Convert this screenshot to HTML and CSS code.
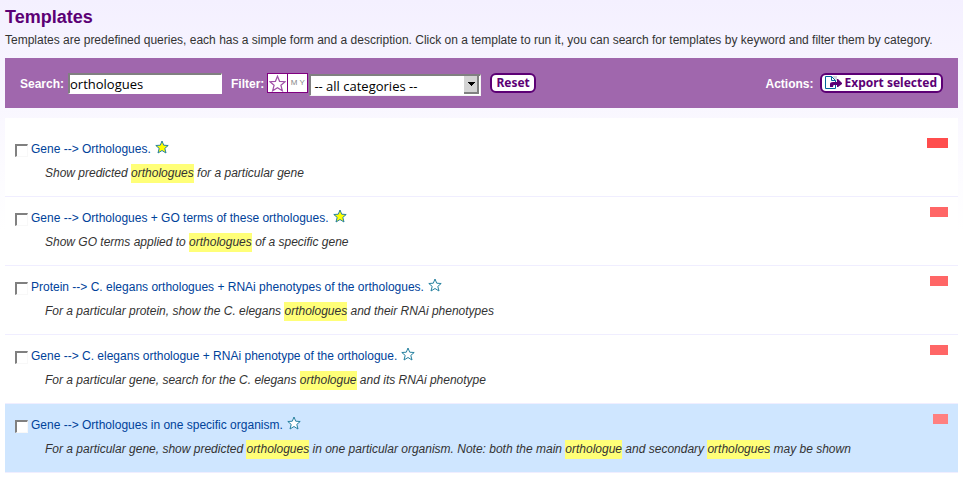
FILE: index.html
```html
<!DOCTYPE html>
<html lang="en">
<head>
<meta charset="utf-8">
<title>Templates</title>
<link rel="stylesheet" href="styles.css">
</head>
<body>
<svg class="defs" aria-hidden="true">
  <symbol id="star" viewBox="0 0 14 14"><path d="M7 1 L8.7 5.2 L13.2 5.5 L9.8 8.4 L11 13 L7 10.5 L3 13 L4.2 8.4 L0.8 5.5 L5.3 5.2 Z"/></symbol>
</svg>
<header>
  <h1>Templates</h1>
  <p class="intro">Templates are predefined queries, each has a simple form and a description. Click on a template to run it, you can search for templates by keyword and filter them by category.</p>
</header>
<form class="toolbar">
  <label class="search-label" for="search">Search:</label>
  <input class="search" id="search" type="text" value="orthologues">
  <label class="filter-label" for="category">Filter:</label>
  <button class="toggle" type="button" aria-label="Favourites"><svg class="filter-star"><use href="#star"/></svg></button>
  <button class="toggle mine" type="button">M Y</button>
  <span class="select-wrap">
    <select class="category" id="category"><option>-- all categories --</option></select>
    <svg class="drop" viewBox="0 0 15 18" aria-hidden="true"><path fill="#d4d4d4" d="M0 0h15v18H0z"/><path fill="#808080" d="M13 0h2v18H0v-2h13z"/><path fill="#000" d="M4 6h7v1h-1v1H9v1H8v1H7V9H6V8H5V7H4z"/></svg>
  </span>
  <button class="btn reset" type="button">Reset</button>
  <span class="actions">Actions:</span>
  <button class="btn" type="button"><svg class="export" viewBox="0 0 17 14" aria-hidden="true"><path fill="#d4d4dc" d="M7 0h5v5z"/><path fill="#fff" stroke="#00659c" d="M.5 .5h6l4 4v8H.5z"/><path fill="none" stroke="#00659c" d="M6.5 .5v4h4"/><path fill="#5c0075" d="M5 11V8q0-2 3-2h4V3h1l4 4v1l-4 3h-1V9H9q-1 0-1 2z"/></svg>Export selected</button>
</form>
<main class="list">
  <article class="item">
    <input class="check" type="checkbox" id="t1">
    <div class="body"><div class="title"><label class="name" for="t1">Gene --&gt; Orthologues.</label><svg class="star on"><use href="#star"/></svg></div>
    <p class="desc">Show predicted <mark>orthologues</mark> for a particular gene</p></div>
    <span class="score top"></span>
  </article>
  <article class="item">
    <input class="check" type="checkbox" id="t2">
    <div class="body"><div class="title"><label class="name" for="t2">Gene --&gt; Orthologues + GO terms of these orthologues.</label><svg class="star on"><use href="#star"/></svg></div>
    <p class="desc">Show GO terms applied to <mark>orthologues</mark> of a specific gene</p></div>
    <span class="score"></span>
  </article>
  <article class="item">
    <input class="check" type="checkbox" id="t3">
    <div class="body"><div class="title"><label class="name" for="t3">Protein --&gt; C. elegans orthologues + RNAi phenotypes of the orthologues.</label><svg class="star"><use href="#star"/></svg></div>
    <p class="desc">For a particular protein, show the C. elegans <mark>orthologues</mark> and their RNAi phenotypes</p></div>
    <span class="score"></span>
  </article>
  <article class="item">
    <input class="check" type="checkbox" id="t4">
    <div class="body"><div class="title"><label class="name" for="t4">Gene --&gt; C. elegans orthologue + RNAi phenotype of the orthologue.</label><svg class="star"><use href="#star"/></svg></div>
    <p class="desc">For a particular gene, search for the C. elegans <mark>orthologue</mark> and its RNAi phenotype</p></div>
    <span class="score"></span>
  </article>
  <article class="item active">
    <input class="check" type="checkbox" id="t5">
    <div class="body"><div class="title"><label class="name" for="t5">Gene --&gt; Orthologues in one specific organism.</label><svg class="star"><use href="#star"/></svg></div>
    <p class="desc">For a particular gene, show predicted <mark>orthologues</mark> in one particular organism. Note: both the main <mark>orthologue</mark> and secondary <mark>orthologues</mark> may be shown</p></div>
    <span class="score low"></span>
  </article>
</main>
</body>
</html>
```

FILE: styles.css
```css
* { box-sizing: border-box; }
body {
  margin: 0;
  padding: 5px 5px 0;
  background: linear-gradient(#f4f0ff, #ffffff 230px) no-repeat #fff;
  color: #333;
  font: 12px/19px "Liberation Sans", Arial, sans-serif;
}
.defs { display: block; width: 0; height: 0; }
h1 { margin: 0; color: #5c0075; font-size: 18px; line-height: 24px; }
.intro { margin: 2px 0 8px; white-space: nowrap; }
.toolbar {
  display: flex;
  align-items: center;
  height: 50px;
  padding: 2px 15px 0;
  background: #a067ad;
  color: #fff;
  font-weight: bold;
  white-space: nowrap;
}
.search {
  width: 154px;
  height: 21px;
  margin: 0 0 1px 4px;
  padding: 0;
  border: 2px solid #fff;
  border-color: #808080 #fff #fff #808080;
  border-width: 2px 1px 1px 2px;
  background: #fff;
  color: #000;
  font: 13px/18px "Open Sans", sans-serif;
}
.filter-label { margin: 0 3px 0 9px; }
.toggle {
  display: flex;
  align-items: center;
  justify-content: center;
  width: 21px;
  height: 20px;
  margin-bottom: 2px;
  padding: 0;
  border: 1px solid #800080;
  background: #fff;
  color: #888;
  font: 8px/18px "Liberation Sans", Arial, sans-serif;
}
.mine { margin-left: -1px; }
.filter-star { width: 17px; height: 17px; fill: #fff; stroke: #a050a8; }
.select-wrap { position: relative; margin: 2px 0 0 1px; height: 22px; }
.category {
  appearance: none;
  display: block;
  width: 172px;
  height: 22px;
  padding: 0 3px;
  border: 2px solid #f4f4f4;
  border-color: #808080 #f4f4f4 #f4f4f4 #808080;
  border-width: 2px 1px 1px 2px;
  border-radius: 0;
  background: #fff;
  color: #000;
  font: 13px/18px "Open Sans", sans-serif;
}
.drop { position: absolute; top: 2px; right: 2px; width: 15px; height: 18px; pointer-events: none; }
.btn {
  display: flex;
  align-items: center;
  height: 20px;
  margin-bottom: 2px;
  padding: 0 4px;
  border: 2px solid #5c0075;
  border-radius: 6px;
  background: #fff;
  color: #5c0075;
  font: bold 12px/16px "Noto Sans", sans-serif;
}
.reset { margin-left: 9px; }
.actions { margin: 0 7px 0 auto; }
.export { width: 17px; height: 14px; margin: 0 2px 0 -1px; }
.list { margin-top: 10px; padding-top: 10px; background: #fff; }
.item {
  display: flex;
  align-items: flex-start;
  height: 69px;
  padding: 10px;
  border-bottom: 1px solid #f0eeff;
}
.active { background: #cfe6ff; }
.check {
  appearance: none;
  flex: none;
  width: 13px;
  height: 13px;
  margin: 6px 3px 0 0;
  border: 2px solid #f8f8f8;
  border-color: #808080 #f8f8f8 #f8f8f8 #808080;
  border-width: 2px 1px 1px 2px;
  background: #fff;
}
.body { flex: 1; }
.title { display: flex; height: 24px; color: #00429a; }
.name { padding-top: 2px; }
.star { width: 14px; height: 14px; margin: 2px 0 0 4px; fill: #fff; stroke: #25809f; }
.on { fill: #ff0; }
.desc { margin: 0 0 0 14px; font-style: italic; line-height: 22px; white-space: nowrap; }
mark { padding: 2px 0 3px; background: #ffff78; color: inherit; }
.score { flex: none; width: 18px; height: 10px; background: #ff6666; }
.top { width: 21px; background: #ff4d4d; }
.low { width: 15px; background: #ff8080; }
```
